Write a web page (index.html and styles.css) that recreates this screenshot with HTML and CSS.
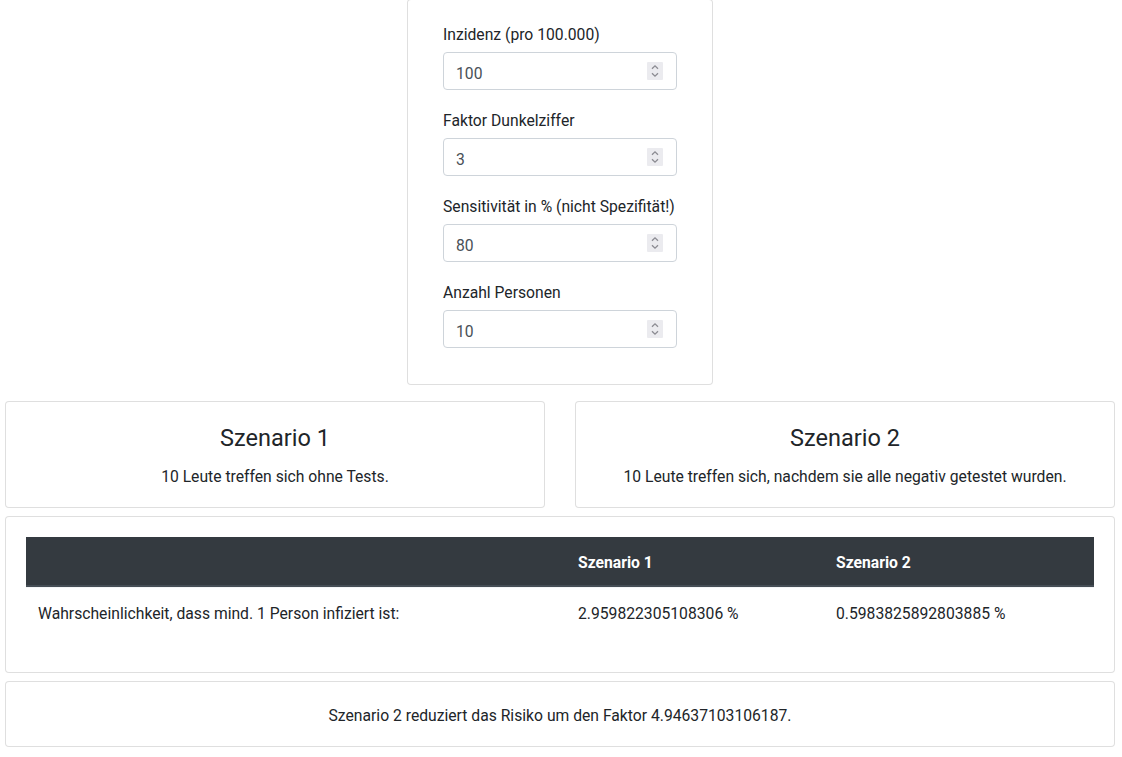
FILE: index.html
```html
<!DOCTYPE html>
<html lang="de">
<head>
<meta charset="utf-8">
<title>Inzidenz Rechner</title>
<link rel="stylesheet" href="styles.css">
</head>
<body>
<div class="page">
  <div class="card input-card">
    <div class="card-body">
      <form class="form">
        <div class="form-group">
          <label for="inz">Inzidenz (pro 100.000)</label>
          <div class="input-wrap">
            <input id="inz" type="number" class="form-control" value="100">
            <span class="spin"><svg width="16" height="18" viewBox="0 0 16 18"><path d="M5 6.8 L8 3.8 L11 6.8 M5 11.2 L8 14.2 L11 11.2" fill="none" stroke="#8b8b92" stroke-width="1.3"/></svg></span>
          </div>
        </div>
        <div class="form-group">
          <label for="dunkel">Faktor Dunkelziffer</label>
          <div class="input-wrap">
            <input id="dunkel" type="number" class="form-control" value="3">
            <span class="spin"><svg width="16" height="18" viewBox="0 0 16 18"><path d="M5 6.8 L8 3.8 L11 6.8 M5 11.2 L8 14.2 L11 11.2" fill="none" stroke="#8b8b92" stroke-width="1.3"/></svg></span>
          </div>
        </div>
        <div class="form-group">
          <label for="sens">Sensitivität in % (nicht Spezifität!)</label>
          <div class="input-wrap">
            <input id="sens" type="number" class="form-control" value="80">
            <span class="spin"><svg width="16" height="18" viewBox="0 0 16 18"><path d="M5 6.8 L8 3.8 L11 6.8 M5 11.2 L8 14.2 L11 11.2" fill="none" stroke="#8b8b92" stroke-width="1.3"/></svg></span>
          </div>
        </div>
        <div class="form-group">
          <label for="anz">Anzahl Personen</label>
          <div class="input-wrap">
            <input id="anz" type="number" class="form-control" value="10">
            <span class="spin"><svg width="16" height="18" viewBox="0 0 16 18"><path d="M5 6.8 L8 3.8 L11 6.8 M5 11.2 L8 14.2 L11 11.2" fill="none" stroke="#8b8b92" stroke-width="1.3"/></svg></span>
          </div>
        </div>
      </form>
    </div>
  </div>

  <div class="scenarios">
    <div class="card">
      <div class="card-body center">
        <h4 class="card-title">Szenario 1</h4>
        <p class="card-text">10 Leute treffen sich ohne Tests.</p>
      </div>
    </div>
    <div class="card">
      <div class="card-body center">
        <h4 class="card-title">Szenario 2</h4>
        <p class="card-text">10 Leute treffen sich, nachdem sie alle negativ getestet wurden.</p>
      </div>
    </div>
  </div>

  <div class="card results">
    <div class="card-body">
      <table class="table">
        <thead>
          <tr>
            <th class="c1"></th>
            <th class="c2">Szenario 1</th>
            <th class="c3">Szenario 2</th>
          </tr>
        </thead>
        <tbody>
          <tr>
            <td>Wahrscheinlichkeit, dass mind. 1 Person infiziert ist:</td>
            <td>2.959822305108306 %</td>
            <td>0.5983825892803885 %</td>
          </tr>
        </tbody>
      </table>
    </div>
  </div>

  <div class="card summary">
    <div class="card-body center">
      <p class="summary-text">Szenario 2 reduziert das Risiko um den Faktor 4.94637103106187.</p>
    </div>
  </div>
</div>
</body>
</html>
```

FILE: styles.css
```css
* { box-sizing: border-box; }

html, body {
  margin: 0;
  padding: 0;
  background: #fff;
}

body {
  font-family: "Segoe UI", Roboto, "Noto Sans", sans-serif;
  font-size: 15.7px;
  line-height: 24px;
  color: #212529;
}

.page {
  width: 1110px;
  margin-left: 5px;
  display: flex;
  flex-direction: column;
}

.card {
  background: #fff;
  border: 1px solid rgba(0, 0, 0, 0.125);
  border-radius: 4px;
}

.card-body {
  padding: 20px;
}

.center {
  text-align: center;
}

.input-card {
  width: 306px;
  align-self: center;
  margin-top: -1px;
}

.form {
  padding: 0 15px;
}

.form-group {
  margin-bottom: 16px;
}

.form-group label {
  display: block;
  margin-bottom: 8px;
  white-space: nowrap;
  line-height: 18px;
  padding-top: 6px;
}

.input-wrap {
  position: relative;
}

.form-control {
  display: block;
  width: 100%;
  height: 38px;
  padding: 8px 32px 4px 12px;
  font-family: inherit;
  font-size: 15.7px;
  line-height: 24px;
  color: #495057;
  background: #fff;
  border: 1px solid #ced4da;
  border-radius: 4px;
  margin: 0;
  -moz-appearance: textfield;
}

.form-control::-webkit-inner-spin-button,
.form-control::-webkit-outer-spin-button {
  -webkit-appearance: none;
  margin: 0;
}

.spin {
  position: absolute;
  right: 14px;
  top: 10px;
  width: 16px;
  height: 18px;
  background: #ebebef;
  border-radius: 1px;
  display: flex;
}

.scenarios {
  margin-top: 16px;
  display: grid;
  grid-template-columns: 540px 540px;
  column-gap: 30px;
}

.card-title {
  margin: 0 0 12px;
  font-size: 23.5px;
  font-weight: 400;
  line-height: 24.8px;
  padding-top: 4px;
}

.card-text,
.summary-text {
  margin: 0;
  line-height: 20px;
  padding-top: 4px;
}

.results {
  margin-top: 8px;
}

.table {
  width: 100%;
  border-collapse: separate;
  border-spacing: 0;
  margin-bottom: 16px;
  table-layout: fixed;
}

.table th,
.table td {
  padding: 16px 12px 12px;
  line-height: 20px;
  text-align: left;
  vertical-align: top;
}

.table td {
  border-top: 1px solid #f4f5f7;
}

.table thead th {
  background: #343a40;
  color: #fff;
  font-weight: 700;
  border-bottom: 2px solid #454d55;
}

.c1 { width: 540px; }
.c2 { width: 258px; }
.c3 { width: 270px; }

.summary {
  margin-top: 8px;
}
```
